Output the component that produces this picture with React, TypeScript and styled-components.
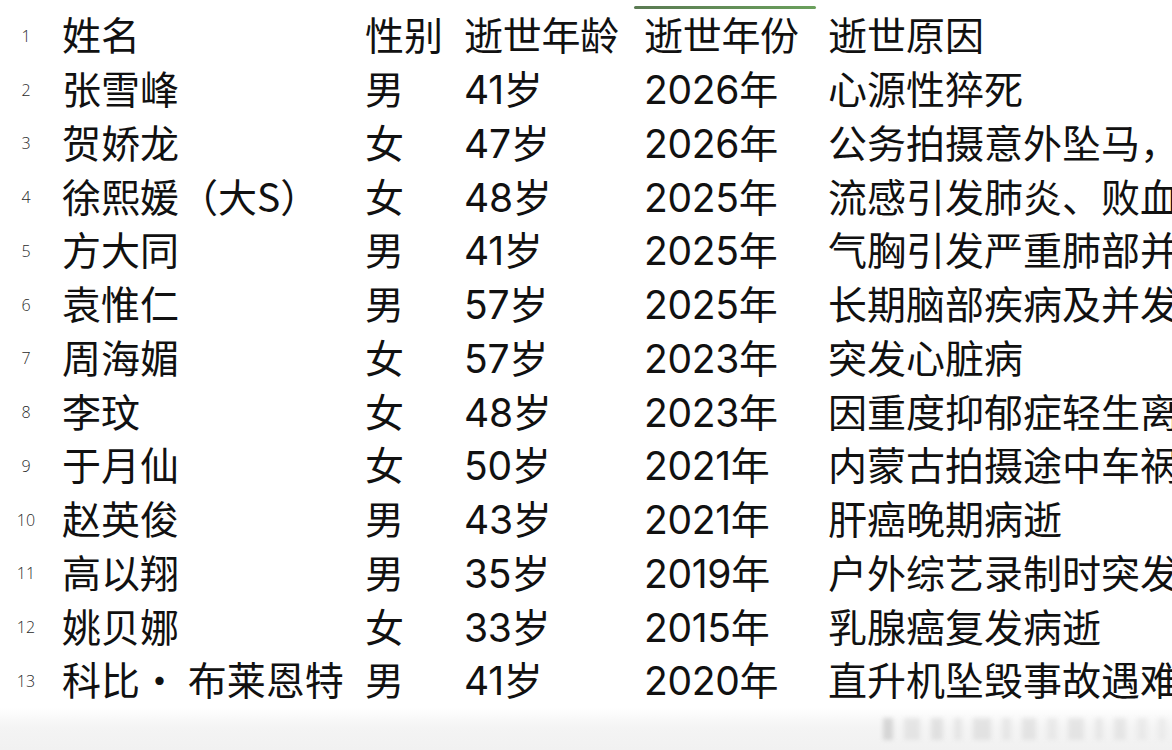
import styled, { createGlobalStyle } from "styled-components";

type Person = {
  name: string;
  gender: string;
  age: string;
  year: string;
  cause: string;
};

const people: Person[] = [
  { name: "姓名", gender: "性别", age: "逝世年龄", year: "逝世年份", cause: "逝世原因" },
  { name: "张雪峰", gender: "男", age: "41岁", year: "2026年", cause: "心源性猝死" },
  { name: "贺娇龙", gender: "女", age: "47岁", year: "2026年", cause: "公务拍摄意外坠马，抢救无效" },
  { name: "徐熙媛（大S）", gender: "女", age: "48岁", year: "2025年", cause: "流感引发肺炎、败血症" },
  { name: "方大同", gender: "男", age: "41岁", year: "2025年", cause: "气胸引发严重肺部并发症" },
  { name: "袁惟仁", gender: "男", age: "57岁", year: "2025年", cause: "长期脑部疾病及并发症" },
  { name: "周海媚", gender: "女", age: "57岁", year: "2023年", cause: "突发心脏病" },
  { name: "李玟", gender: "女", age: "48岁", year: "2023年", cause: "因重度抑郁症轻生离世" },
  { name: "于月仙", gender: "女", age: "50岁", year: "2021年", cause: "内蒙古拍摄途中车祸" },
  { name: "赵英俊", gender: "男", age: "43岁", year: "2021年", cause: "肝癌晚期病逝" },
  { name: "高以翔", gender: "男", age: "35岁", year: "2019年", cause: "户外综艺录制时突发心源性猝死" },
  { name: "姚贝娜", gender: "女", age: "33岁", year: "2015年", cause: "乳腺癌复发病逝" },
  { name: "科比· 布莱恩特", gender: "男", age: "41岁", year: "2020年", cause: "直升机坠毁事故遇难" },
];

const GlobalStyle = createGlobalStyle`
  html, body {
    margin: 0;
    padding: 0;
    background: #ffffff;
  }
  #root {
    width: 1172px;
    height: 750px;
    overflow: hidden;
  }
`;

const Page = styled.div`
  width: 1172px;
  height: 750px;
  display: flex;
  flex-direction: column;
  background: #ffffff;
  overflow: hidden;
`;

const Sheet = styled.div`
  padding-top: 9px;
  display: grid;
  grid-template-columns: 62px 303px 99px 180px 184px 1fr;
  grid-auto-rows: 53.75px;
  color: #111;
  font-size: 39px;
  overflow: hidden;
`;

const Row = styled.div`
  display: contents;
`;

const RowNum = styled.div`
  display: flex;
  align-items: center;
  justify-content: center;
  padding-right: 10px;
  font-family: "Open Sans", "Liberation Sans", sans-serif;
  font-size: 16px;
  font-weight: 300;
  color: #2a2a2a;
`;

/* $numeric cells take their digits from Inter, the rest stays in Noto CJK */
const Cell = styled.div<{ $numeric?: boolean; $marked?: boolean }>`
  position: relative;
  display: flex;
  align-items: center;
  white-space: nowrap;
  line-height: 1;
  font-family: ${(p) =>
    p.$numeric
      ? `"Inter", "Noto Sans CJK SC", sans-serif`
      : `"Noto Sans CJK SC", "Noto Sans", sans-serif`};
  letter-spacing: ${(p) => (p.$numeric ? "-0.3px" : "0")};
  padding-bottom: ${(p) => (p.$numeric ? "0" : "4px")};

  ${(p) =>
    p.$marked &&
    `
    &::before {
      content: "";
      position: absolute;
      left: -10px;
      top: -3px;
      width: 182px;
      height: 3px;
      border-radius: 2px;
      background: linear-gradient(90deg, #5a7a52, #6aa05c);
    }
  `}
`;

const Footer = styled.div`
  flex: 1;
  display: flex;
  justify-content: flex-end;
  align-items: center;
  padding-right: 6px;
  background: linear-gradient(180deg, #ffffff 0%, #f4f4f4 45%, #f1f1f1 100%);
`;

const Watermark = styled.div`
  display: flex;
  align-items: center;
  gap: 11px;
  filter: blur(2px);
  opacity: 0.5;
`;

const Bar = styled.span<{ $w: number; $tone: string }>`
  display: block;
  width: ${(p) => p.$w}px;
  height: 22px;
  background: ${(p) => p.$tone};
`;

const bars = [
  { w: 10, tone: "#b8b8b8" },
  { w: 16, tone: "#d6d6d6" },
  { w: 12, tone: "#cfcfcf" },
  { w: 8, tone: "#d9d9d9" },
  { w: 18, tone: "#d2d2d2" },
  { w: 9, tone: "#dadada" },
  { w: 14, tone: "#d4d4d4" },
  { w: 10, tone: "#dedede" },
  { w: 16, tone: "#d6d6d6" },
  { w: 8, tone: "#dcdcdc" },
  { w: 12, tone: "#d8d8d8" },
  { w: 10, tone: "#e0e0e0" },
  { w: 8, tone: "#e2e2e2" },
];

export default function App() {
  return (
    <Page>
      <GlobalStyle />
      <Sheet>
        {people.map((p, i) => (
          <Row key={i}>
            <RowNum>{i + 1}</RowNum>
            <Cell>{p.name}</Cell>
            <Cell>{p.gender}</Cell>
            <Cell $numeric>{p.age}</Cell>
            <Cell $numeric $marked={i === 0}>
              {p.year}
            </Cell>
            <Cell>{p.cause}</Cell>
          </Row>
        ))}
      </Sheet>
      <Footer>
        <Watermark>
          {bars.map((b, i) => (
            <Bar key={i} $w={b.w} $tone={b.tone} />
          ))}
        </Watermark>
      </Footer>
    </Page>
  );
}
